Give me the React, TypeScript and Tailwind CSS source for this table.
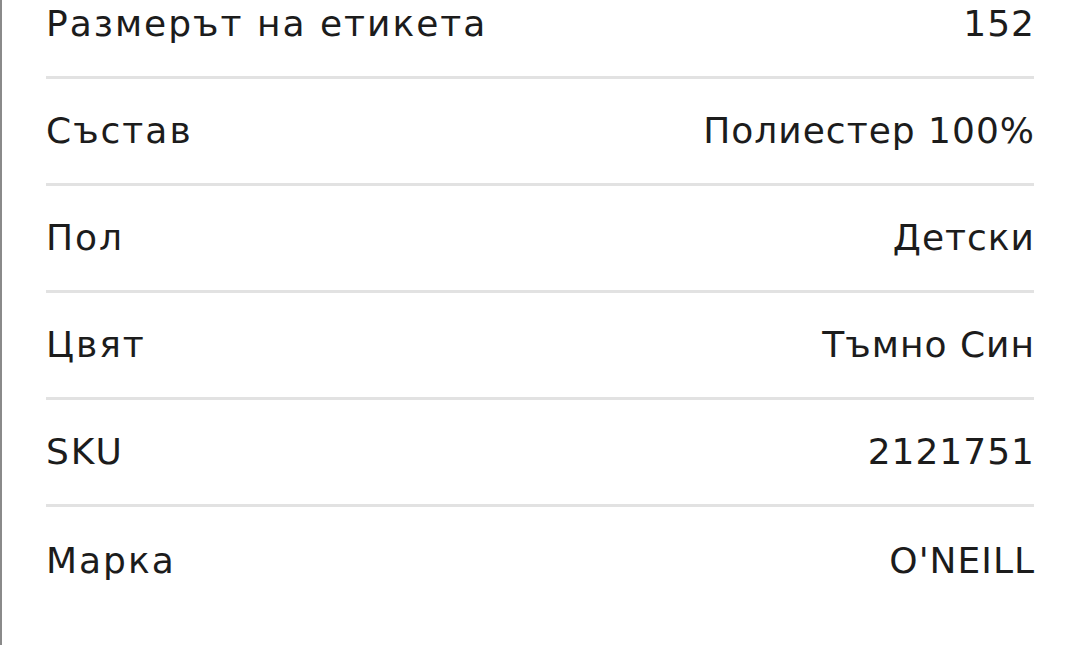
const rows: [string, string][] = [
  ['Размерът на етикета', '152'],
  ['Състав', 'Полиестер 100%'],
  ['Пол', 'Детски'],
  ['Цвят', 'Тъмно Син'],
  ['SKU', '2121751'],
  ['Марка', "O'NEILL"],
]

export default function App() {
  return (
    <div
      lang="bg"
      className="h-[645px] w-[1080px] overflow-hidden border-l-2 border-[#8a8a8a] bg-white"
      style={{ fontFamily: '"DejaVu Sans", "Noto Sans", sans-serif' }}
    >
      <div className="-mt-[28px] pl-[44px] pr-[46px]">
        {rows.map(([label, value], i) => (
          <div
            key={label}
            className={`flex h-[107px] items-center justify-between text-[36px] font-normal text-[#1c1c1c] ${
              i < rows.length - 1 ? 'border-b-[3px] border-[#e2e2e2]' : ''
            }`}
          >
            <span className="tracking-[2px]">{label}</span>
            <span className="-mr-[1px] tracking-[1px]">{value}</span>
          </div>
        ))}
      </div>
    </div>
  )
}
